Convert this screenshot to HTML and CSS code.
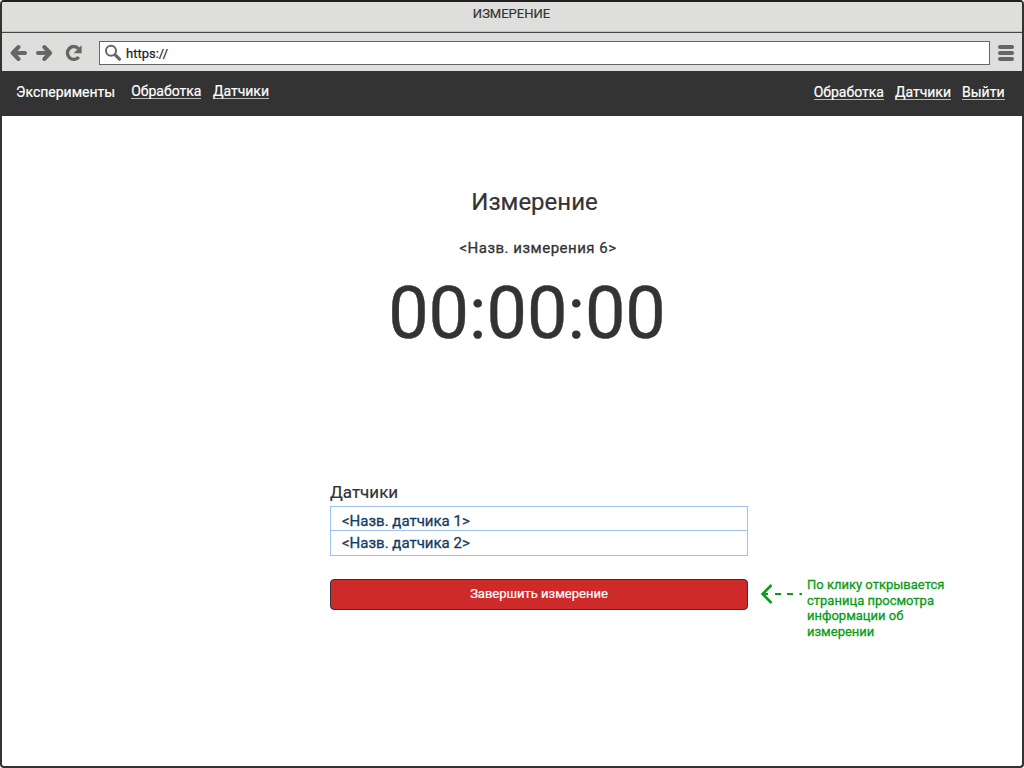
FILE: index.html
```html
<!DOCTYPE html>
<html lang="ru">
<head>
<meta charset="utf-8">
<title>Измерение</title>
<link rel="stylesheet" href="styles.css">
</head>
<body>
<div class="window">
  <header class="titlebar">ИЗМЕРЕНИЕ</header>
  <div class="toolbar">
    <svg class="controls" width="74" height="20" viewBox="0 0 74 20" fill="none" stroke="#666" stroke-width="4" stroke-linecap="round" stroke-linejoin="round">
      <path d="M8.500 4 2.700 10l5.800 6M4 10h11"/>
      <path d="M34.300 4l5.800 6-5.800 6M39 10H28"/>
      <path d="M68.800 14A6.400 6.400 0 1 1 68.500 5.600" stroke-width="3.400" stroke-linecap="butt"/>
      <path d="M71.600 2.300v7.900h-8z" fill="#666" stroke="none"/>
    </svg>
    <div class="address">
      <svg class="search" width="18" height="18" viewBox="0 0 18 18" fill="none" stroke="#666">
        <circle cx="6" cy="6.700" r="5" stroke-width="2"/>
        <path d="M10.500 11.200l4 4" stroke-width="3.200" stroke-linecap="round"/>
      </svg>
      <span class="url">https://</span>
    </div>
    <svg class="menu" width="16" height="16" viewBox="0 0 16 16" fill="#666">
      <rect width="16" height="4" rx="2"/><rect y="6" width="16" height="4" rx="2"/><rect y="12" width="16" height="4" rx="2"/>
    </svg>
  </div>
  <nav class="nav">
    <div class="nav-left"><span class="current">Эксперименты</span><a>Обработка</a><a>Датчики</a></div>
    <div class="nav-right"><a>Обработка</a><a>Датчики</a><a>Выйти</a></div>
  </nav>
  <main class="content">
    <h1 class="title">Измерение</h1>
    <p class="name">&lt;Назв. измерения 6&gt;</p>
    <div class="timer">00:00:00</div>
    <h2 class="subtitle">Датчики</h2>
    <ul class="sensors"><li>&lt;Назв. датчика 1&gt;</li><li>&lt;Назв. датчика 2&gt;</li></ul>
    <div class="action">
      <button class="finish">Завершить измерение</button>
      <svg class="arrow" width="43" height="22" viewBox="0 0 43 22" fill="none" stroke="#089c18" stroke-width="2">
        <path d="M11.500 2 2.500 11l9 9" stroke-width="2.500"/><path d="M3 11h5M15 11h6M27 11h6M39.500 11h2.500"/>
      </svg>
      <p class="note">По клику открывается<br>страница просмотра<br>информации об<br>измерении</p>
    </div>
  </main>
</div>
</body>
</html>
```
FILE: styles.css
```css
* { box-sizing: border-box; }
body { margin: 0; background: #fff; font-family: Roboto, "Liberation Sans", sans-serif; color: #333; }
h1, h2, p, ul { margin: 0; padding: 0; }
.window { width: 1024px; height: 768px; border: 2px solid #333; border-top-color: #231f20; border-radius: 4px; overflow: hidden; background: #fff; }
.titlebar { height: 31px; padding: 3px 1px 0 0; background: #dededc; border-bottom: 1px solid #444; box-shadow: inset 0 -1px #c4c4c2; text-align: center; font-size: 13px; line-height: 17px; -webkit-text-stroke: .2px; }
.toolbar { display: flex; align-items: center; height: 38px; padding: 2px 8px 0; background: #dededc; }
.controls { flex: none; margin-right: 15px; }
.address { display: flex; align-items: center; width: 891px; height: 24px; padding-left: 5px; background: #fff; border: 1px solid #666; }
.url { margin-left: 3px; padding-top: 1px; font-size: 13px; color: #222; -webkit-text-stroke: .2px; }
.menu { flex: none; margin-left: 8px; }
.nav { display: flex; justify-content: space-between; height: 45px; padding: 12px 17.500px 0 14px; background: #333; color: #fff; font-size: 14px; line-height: 17px; -webkit-text-stroke: .2px; }
.nav-left, .nav-right { display: flex; align-items: flex-start; gap: 11px; }
.nav-right { padding-top: 1px; }
.current { margin: 1px 5px 0 0; }
.nav a { height: 16px; border-bottom: 1px solid #bbb; }
.nav-left a:last-child { margin-left: .5px; }
.content { padding: 70px 0 0 328px; }
.title { width: 409px; text-align: center; font-size: 24px; font-weight: 400; line-height: 32px; -webkit-text-stroke: .2px; }
.name { width: 416px; margin-top: 20px; text-align: center; font-size: 15px; line-height: 20px; letter-spacing: .5px; -webkit-text-stroke: .3px; }
.timer { width: 394px; margin-top: 14px; text-align: center; font-size: 72px; line-height: 84px; -webkit-text-stroke: .4px; }
.subtitle { margin-top: 124px; font-size: 17px; font-weight: 400; line-height: 24px; -webkit-text-stroke: .2px; }
.sensors { width: 418px; margin-top: 2px; border: 1px solid #9cc2f2; list-style: none; color: #123c66; font-size: 15px; -webkit-text-stroke: .3px; }
.sensors li { height: 23px; padding: 4px 0 0 11px; line-height: 20px; }
.sensors li + li { height: 25px; padding-top: 2px; border-top: 1px solid #9cc2f2; }
.action { display: flex; align-items: flex-start; margin-top: 23px; }
.finish { flex: none; width: 418px; height: 31px; padding: 0 0 2px; border: 1px solid #333; border-radius: 4px; background: #cf2a2a; color: #fff; font: 13px Roboto, sans-serif; -webkit-text-stroke: .2px; }
.arrow { flex: none; margin: 4px 4px 0 12px; }
.note { margin-top: -2px; color: #089c18; font-size: 13px; line-height: 15.600px; -webkit-text-stroke: .3px; white-space: nowrap; }
```
